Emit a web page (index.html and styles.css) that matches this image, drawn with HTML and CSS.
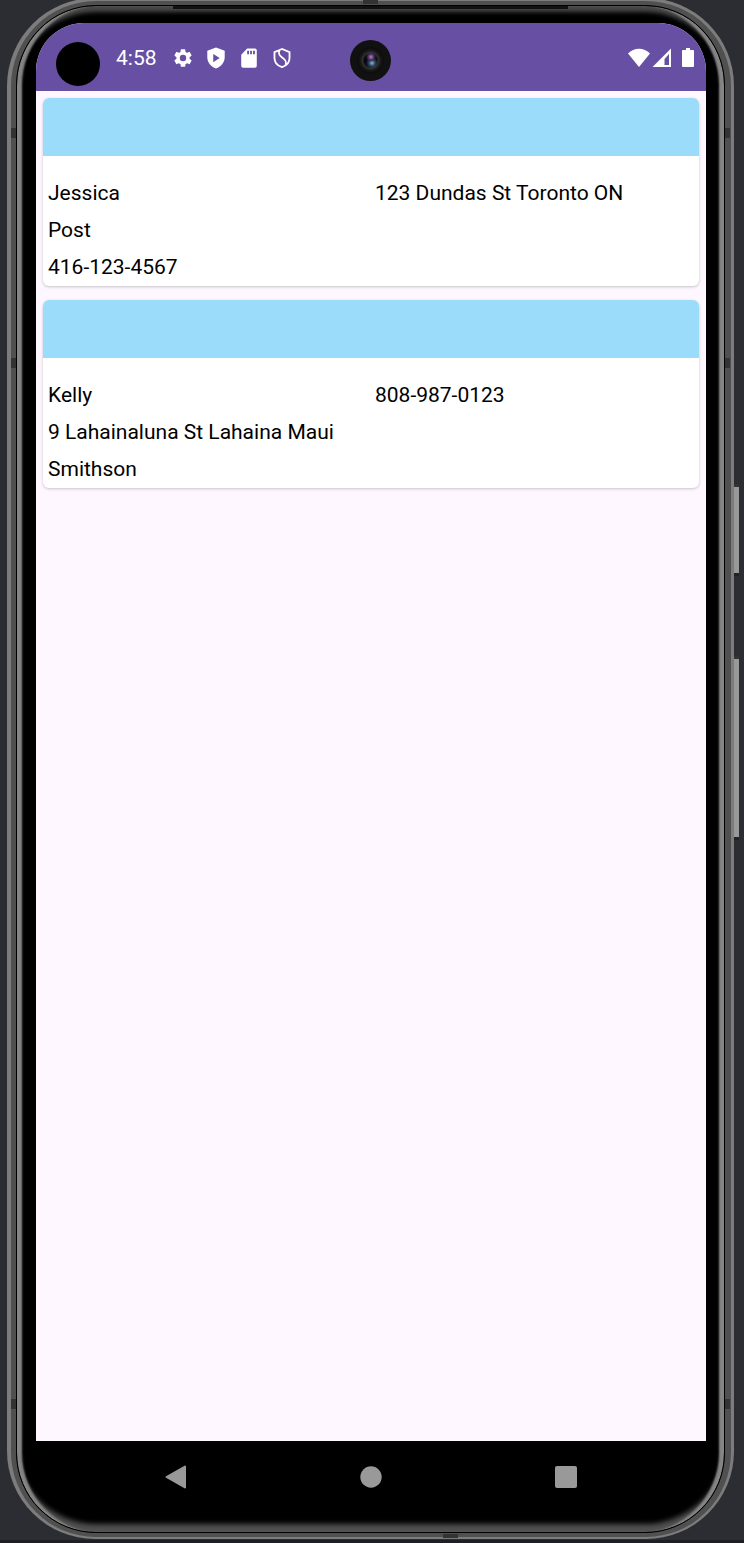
FILE: index.html
```html
<!DOCTYPE html>
<html lang="en">
<head>
<meta charset="utf-8">
<meta name="viewport" content="width=device-width, initial-scale=1">
<title>Contacts</title>
<link rel="stylesheet" href="styles.css">
</head>
<body>
<div class="rim">
  <i class="key key-power"></i>
  <i class="key key-volume"></i>
  <i class="seam seam-left seam-high"></i>
  <i class="seam seam-left seam-mid"></i>
  <i class="seam seam-left seam-low"></i>
  <i class="seam seam-right seam-high"></i>
  <i class="seam seam-right seam-mid"></i>
  <i class="seam seam-right seam-low"></i>
  <i class="seam-flat seam-top"></i>
  <i class="seam-flat seam-bottom"></i>
  <div class="band">
    <div class="glass">
      <i class="speaker"></i>
      <div class="screen">
        <header class="status">
          <span class="hole"></span>
          <span class="clock">4:58</span>
          <div class="notices">
            <svg class="icon" viewBox="0 0 24 24"><path fill-rule="evenodd" d="M19.140 12.940c.04-.3.06-.61.06-.94s-.02-.64-.07-.94l2.030-1.580a.49.49 0 0 0 .12-.61l-1.920-3.320a.49.49 0 0 0-.59-.22l-2.390.96a7 7 0 0 0-1.620-.94l-.36-2.540A.48.48 0 0 0 13.920 2.400h-3.840a.47.47 0 0 0-.47.410l-.36 2.540c-.59.24-1.130.570-1.620.940l-2.390-.960a.48.48 0 0 0-.59.220L2.740 8.870a.47.47 0 0 0 .12.610l2.030 1.580c-.05.300-.09.630-.09.940s.020.640.070.940l-2.030 1.580a.49.49 0 0 0-.12.610l1.920 3.320c.12.220.370.290.590.220l2.390-.960c.500.380 1.030.700 1.620.940l.360 2.540c.050.240.240.410.480.410h3.840c.240 0 .440-.170.470-.410l.360-2.540a7 7 0 0 0 1.620-.940l2.390.960c.220.080.470 0 .590-.220l1.920-3.320a.47.47 0 0 0-.12-.610zM12 15.500a3.500 3.500 0 1 1 0-7 3.500 3.500 0 0 1 0 7z"/></svg>
            <svg class="icon" viewBox="0 0 24 24"><path fill-rule="evenodd" d="M12 .5 2.500 4.200V11c0 6 4 10.700 9.500 12.500C17.500 21.700 21.500 17 21.500 11V4.200zM9 7.500v9l7-4.500z"/></svg>
            <svg class="icon" viewBox="0 0 24 24"><path fill-rule="evenodd" d="M18.500 1.500H10L3.500 8.500v12a2 2 0 0 0 2 2h13a2 2 0 0 0 2-2v-17a2 2 0 0 0-2-2zM12 8h-2V4h2zm3.200 0h-2V4h2zm3.200 0h-2V4h2z"/></svg>
            <svg class="icon line" viewBox="0 0 24 24"><path d="M12 2.200 3.800 5.500V12c0 4.800 3.500 8.500 8.200 10 4.700-1.500 8.200-5.200 8.200-10V5.500zM9 3.800c-1 4 0 5.700 3.500 8s4.500 4 3.500 8"/></svg>
          </div>
          <span class="camera"></span>
          <div class="signals">
            <svg class="wifi" viewBox="0 0 22 20"><path d="M0 5.500C6-.8 16-.8 22 5.500L11 19z"/></svg>
            <svg class="cell" viewBox="0 0 20 20"><path fill-rule="evenodd" d="M19 .5V19H.5zM17 6l-4.500 5V17H17z"/></svg>
            <svg class="battery" viewBox="0 0 12 20"><path d="M4 0h4v2h3a1 1 0 0 1 1 1v15a1 1 0 0 1-1 1H1a1 1 0 0 1-1-1V3a1 1 0 0 1 1-1h3z"/></svg>
          </div>
        </header>
        <main class="list">
          <article class="card">
            <div class="card-top"></div>
            <div class="card-body">
              <div><p>Jessica</p><p>Post</p><p>416-123-4567</p></div>
              <div><p>123 Dundas St Toronto ON</p></div>
            </div>
          </article>
          <article class="card">
            <div class="card-top"></div>
            <div class="card-body">
              <div><p>Kelly</p><p>9 Lahainaluna St Lahaina Maui</p><p>Smithson</p></div>
              <div><p>808-987-0123</p></div>
            </div>
          </article>
        </main>
      </div>
      <nav class="nav">
        <button type="button" aria-label="Back"><svg viewBox="0 0 24 24"><path d="M21 1.500v21L2.500 12z" stroke="#999" stroke-width="2" stroke-linejoin="round"/></svg></button>
        <button type="button" aria-label="Home"><svg viewBox="0 0 24 24"><circle cx="12" cy="12" r="10.700"/></svg></button>
        <button type="button" aria-label="Overview"><svg viewBox="0 0 24 24"><rect x="1" y="1" width="22" height="22" rx="2"/></svg></button>
      </nav>
    </div>
  </div>
</div>
</body>
</html>
```

FILE: styles.css
```css
* { box-sizing: border-box; }

body {
  margin: 0;
  min-height: 100vh;
  display: flex;
  flex-direction: column;
  padding: 0 10px 3px 7px;
  background: linear-gradient(to top, #1e1f24 3px, #2c2d32 3px);
  font-family: Roboto, "Noto Sans", sans-serif;
  color: #000;
  overflow-x: hidden;
}

p { margin: 0; }

.rim {
  position: relative;
  flex: 1;
  display: flex;
  margin: -2px 0 1px;
  padding: 3px 3px 2px 4px;
  border-radius: 88px;
  background: #7c7c7c;
}

.band {
  flex: 1;
  display: flex;
  min-width: 0;
  padding: 4px 6px 4px 5px;
  border-radius: 85px;
  background: #505050;
}

.glass {
  position: relative;
  flex: 1;
  display: flex;
  flex-direction: column;
  min-width: 0;
  padding: 17px 18px 0 19px;
  border: 1px solid #000;
  border-radius: 80px;
  background: #000;
  box-shadow: inset 6px 0 2px -1px #858585, inset -6px 0 2px -1px #858585,
    inset 0 8px 4px -2px #484848, inset 0 -10px 5px -2px #505050;
}

.speaker {
  position: absolute;
  top: 0;
  left: 22%;
  right: 22%;
  height: 3px;
  background: #111;
}

.key {
  position: absolute;
  left: 100%;
  width: 5px;
  background: #999;
  border-top: 3px solid #333;
  border-bottom: 3px solid #222;
}
.key-power { top: 486px; height: 92px; }
.key-volume { top: 658px; height: 184px; }

.seam { position: absolute; width: 5px; height: 10px; background: #333; }
.seam-left { left: 4px; }
.seam-right { right: 4px; }
.seam-high { top: 130px; }
.seam-mid { top: 360px; }
.seam-low { bottom: 130px; }
.seam-flat { position: absolute; width: 15px; height: 4px; background: #333; }
.seam-top { top: 2px; left: 49%; }
.seam-bottom { bottom: 1px; right: 38%; }

.screen {
  flex: 1;
  border-radius: 48px 48px 0 0;
  overflow: hidden;
  background: #fef7ff;
}

.status {
  position: relative;
  display: flex;
  align-items: center;
  height: 68px;
  padding: 1px 12px 0 20px;
  background: #6750a3;
  color: #fff;
}
.hole {
  width: 44px;
  height: 44px;
  margin-top: 13px;
  border-radius: 50%;
  background: #000;
}
.clock { margin-left: 16px; font-size: 21px; line-height: 24px; }
.notices { display: flex; gap: 11px; margin-left: 15px; }
.icon { display: block; width: 22px; height: 22px; fill: #fff; }
.line { fill: none; stroke: #fff; stroke-width: 2; }
.camera {
  position: absolute;
  top: 17px;
  left: 50%;
  width: 41px;
  height: 41px;
  margin-left: -21px;
  border-radius: 50%;
  background:
    radial-gradient(circle at 21px 17px, #a888b8 0, #4a2a60 3px, transparent 5px),
    radial-gradient(circle at 22px 23px, #8fb8d0 0, #2c4a60 3px, transparent 6px),
    radial-gradient(circle, #080810 6px, #303030 8px, #181818 10px, #0c0c0c 13px, #111 14px);
}
.signals { display: flex; gap: 2px; margin-left: auto; }
.signals svg { display: block; height: 20px; fill: #fff; }
.wifi { width: 22px; }
.cell { width: 20px; }
.battery { width: 12px; margin-left: 8px; }

.list { display: grid; gap: 14px; padding: 7px; }
.card {
  overflow: hidden;
  border-radius: 6px;
  background: #fff;
  box-shadow: 0 1px 3px #00000038;
}
.card-top { height: 58px; background: #9bdcfb; }
.card-body {
  display: grid;
  grid-template-columns: 1fr 1fr;
  column-gap: 3px;
  padding: 19px 0 0 5px;
  font-size: 21px;
  line-height: 37px;
}

.nav {
  display: grid;
  grid-template-columns: repeat(3, 1fr);
  height: 91px;
  padding: 24px 42px 0;
  align-items: start;
  justify-items: center;
}
.nav button {
  padding: 0;
  border: 0;
  background: none;
  cursor: pointer;
}
.nav svg { display: block; width: 24px; height: 24px; fill: #999; }
```
